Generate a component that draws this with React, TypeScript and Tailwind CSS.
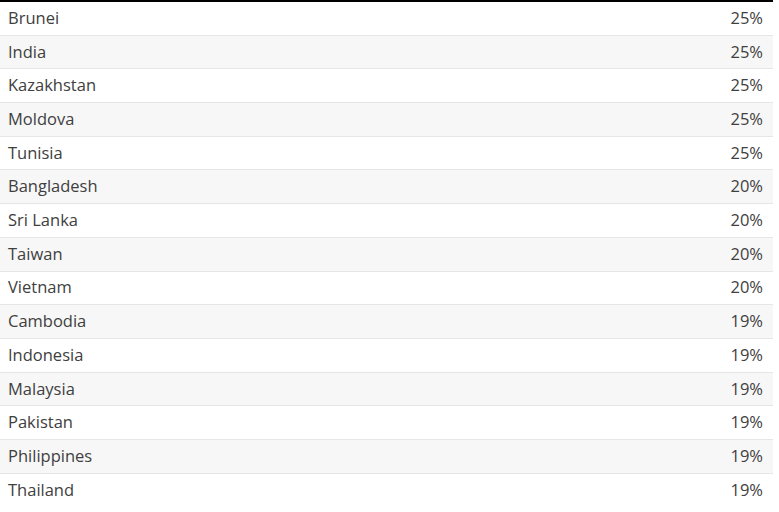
const rows: [string, string][] = [
  ["Brunei", "25%"],
  ["India", "25%"],
  ["Kazakhstan", "25%"],
  ["Moldova", "25%"],
  ["Tunisia", "25%"],
  ["Bangladesh", "20%"],
  ["Sri Lanka", "20%"],
  ["Taiwan", "20%"],
  ["Vietnam", "20%"],
  ["Cambodia", "19%"],
  ["Indonesia", "19%"],
  ["Malaysia", "19%"],
  ["Pakistan", "19%"],
  ["Philippines", "19%"],
  ["Thailand", "19%"],
];

export default function App() {
  return (
    <div className="w-[779px] h-[512px] bg-white pr-[6px] font-['Open_Sans',sans-serif]">
      <div className="border-t-2 border-black">
        {rows.map(([country, rate], i) => (
          <div
            key={country}
            className={`flex items-center justify-between h-[33.7px] pl-[8px] pr-[10px] text-[16.5px] text-[#404040] ${
              i < rows.length - 1 ? "border-b border-[#e6e6e6]" : ""
            } ${i % 2 === 1 ? "bg-[#f7f7f7]" : "bg-white"}`}
          >
            <span>{country}</span>
            <span>{rate}</span>
          </div>
        ))}
      </div>
    </div>
  );
}
